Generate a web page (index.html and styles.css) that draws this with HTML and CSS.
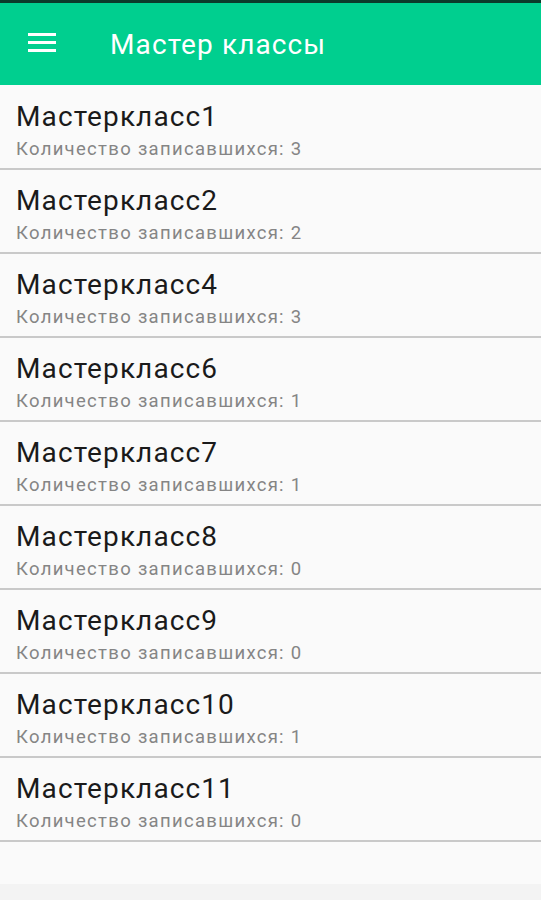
FILE: index.html
```html
<!DOCTYPE html>
<html lang="ru">
<head>
  <meta charset="UTF-8" />
  <title>Мастер классы</title>
  <link rel="stylesheet" href="styles.css">
</head>
<body>

  <div class="toolbar">
    <svg class="menu-icon" width="28" height="22" viewBox="0 0 28 22">
      <rect x="0" y="1" width="28" height="3" fill="#fff"/>
      <rect x="0" y="9" width="28" height="3" fill="#fff"/>
      <rect x="0" y="17" width="28" height="3" fill="#fff"/>
    </svg>
    <h1>Мастер классы</h1>
  </div>

  <ul class="list">
    <li><div class="name">Мастеркласс1</div><div class="count">Количество записавшихся: 3</div></li>
    <li><div class="name">Мастеркласс2</div><div class="count">Количество записавшихся: 2</div></li>
    <li><div class="name">Мастеркласс4</div><div class="count">Количество записавшихся: 3</div></li>
    <li><div class="name">Мастеркласс6</div><div class="count">Количество записавшихся: 1</div></li>
    <li><div class="name">Мастеркласс7</div><div class="count">Количество записавшихся: 1</div></li>
    <li><div class="name">Мастеркласс8</div><div class="count">Количество записавшихся: 0</div></li>
    <li><div class="name">Мастеркласс9</div><div class="count">Количество записавшихся: 0</div></li>
    <li><div class="name">Мастеркласс10</div><div class="count">Количество записавшихся: 1</div></li>
    <li><div class="name">Мастеркласс11</div><div class="count">Количество записавшихся: 0</div></li>
  </ul>

  <div class="bottom-strip"></div>

</body>
</html>
```

FILE: styles.css
```css
body {
  margin: 0;
  font-family: Roboto, "Noto Sans", sans-serif;
  background: #fafafa;
  height: 900px;
  overflow: hidden;
}

.toolbar {
  display: flex;
  align-items: center;
  height: 82px;
  border-top: 3px solid #0b3b2b;
  background: #00cf8f;
  color: #fff;
}

.menu-icon {
  margin-left: 28px;
  margin-top: -2px;
}

.toolbar h1 {
  margin: 0 0 0 54px;
  font-size: 28px;
  font-weight: 400;
  letter-spacing: 1.1px;
}

.list {
  list-style: none;
  margin: 0;
  padding: 1px 0 0;
}

.list li {
  height: 82px;
  padding-left: 16px;
  border-bottom: 2px solid #c9c9c9;
}

.name {
  padding-top: 14px;
  font-size: 28px;
  line-height: 34px;
  letter-spacing: 1.1px;
  color: #1a1a1a;
}

.count {
  margin-top: 3px;
  font-size: 18.5px;
  line-height: 24px;
  letter-spacing: 1.3px;
  color: #858585;
}

.bottom-strip {
  margin-top: 42px;
  height: 20px;
  background: #f3f3f3;
}
```
